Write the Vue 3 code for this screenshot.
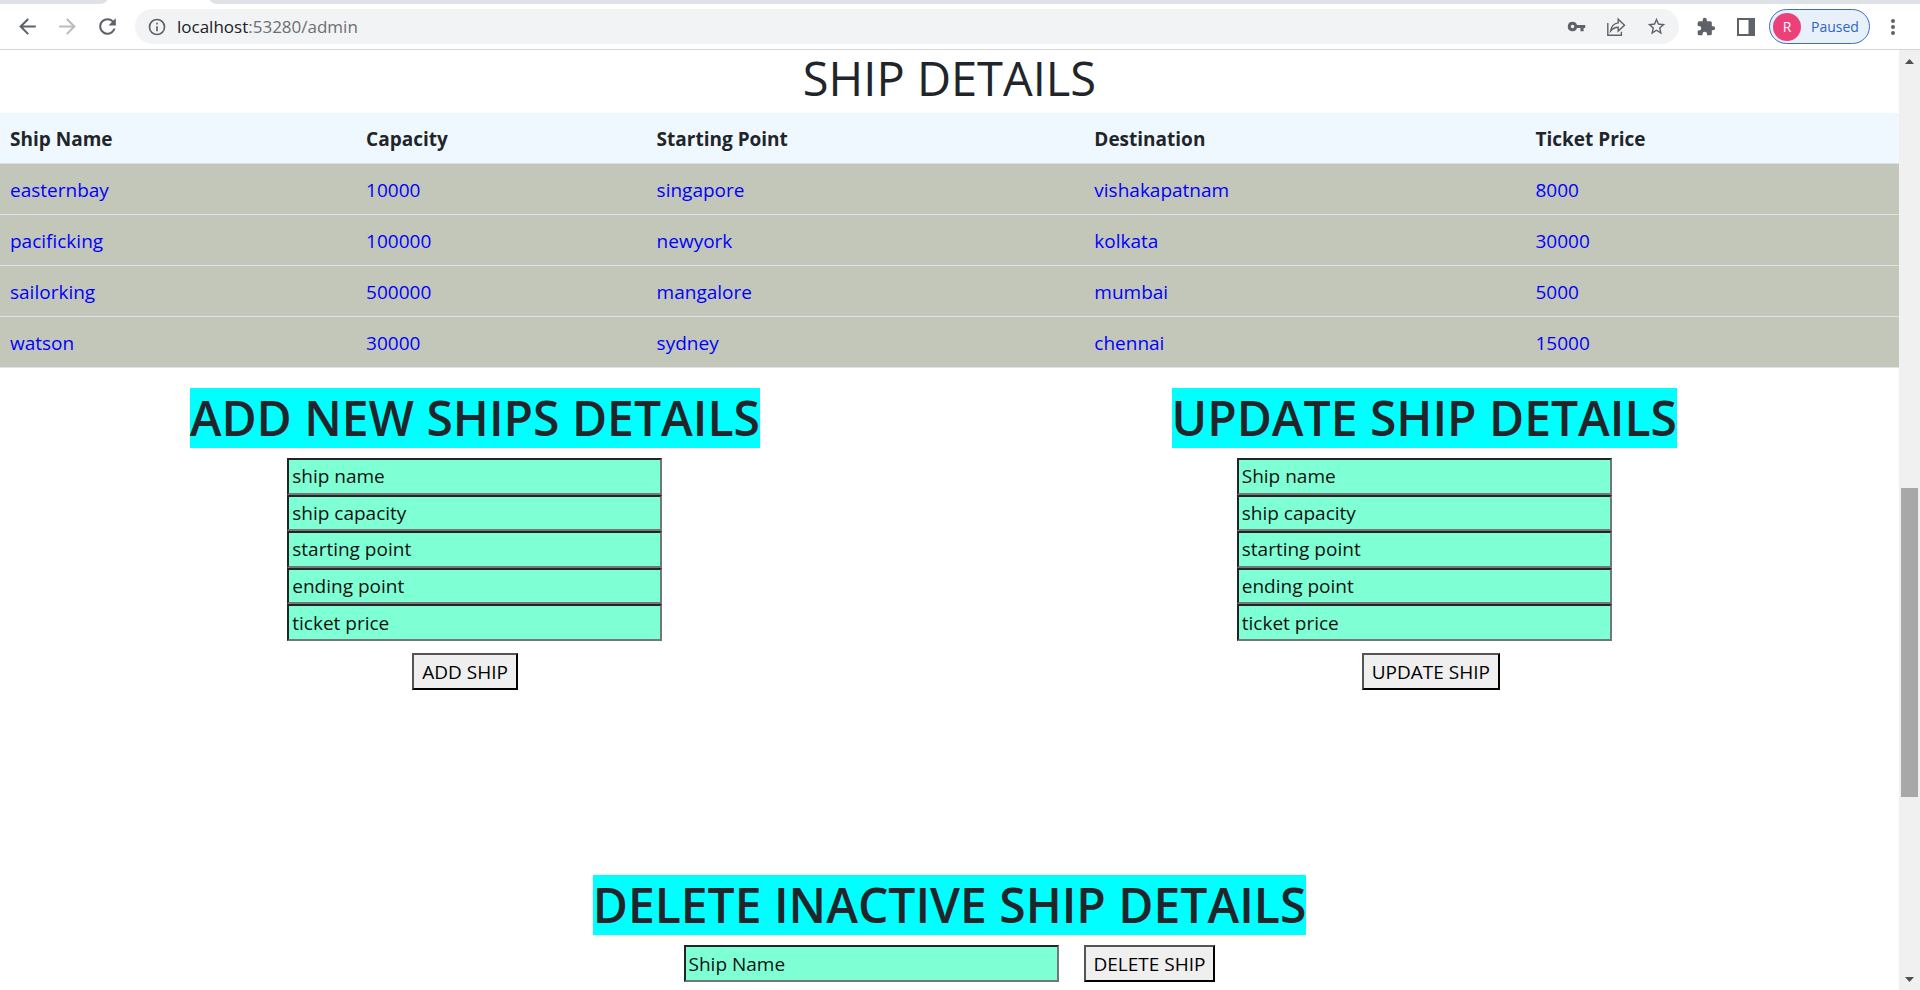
<script setup>
const columns = ['Ship Name', 'Capacity', 'Starting Point', 'Destination', 'Ticket Price']

const ships = [
  { name: 'easternbay', capacity: 10000, from: 'singapore', to: 'vishakapatnam', price: 8000 },
  { name: 'pacificking', capacity: 100000, from: 'newyork', to: 'kolkata', price: 30000 },
  { name: 'sailorking', capacity: 500000, from: 'mangalore', to: 'mumbai', price: 5000 },
  { name: 'watson', capacity: 30000, from: 'sydney', to: 'chennai', price: 15000 }
]

const forms = [
  {
    id: 'add',
    title: 'ADD NEW SHIPS DETAILS',
    fields: ['ship name', 'ship capacity', 'starting point', 'ending point', 'ticket price'],
    action: 'ADD SHIP'
  },
  {
    id: 'update',
    title: 'UPDATE SHIP DETAILS',
    fields: ['Ship name', 'ship capacity', 'starting point', 'ending point', 'ticket price'],
    action: 'UPDATE SHIP'
  }
]
</script>

<template>
  <div class="window">
    <div class="tabstrip"><span class="tab-left"></span><span class="tab-right"></span></div>
    <header class="toolbar">
      <nav class="nav">
        <button class="icon" type="button" aria-label="Back">
          <svg width="25" height="25" viewBox="0 0 24 24"><path d="M20 11H7.8l5.6-5.6L12 4l-8 8 8 8 1.4-1.4L7.8 13H20z" /></svg>
        </button>
        <button class="icon faded" type="button" aria-label="Forward">
          <svg width="25" height="25" viewBox="0 0 24 24"><path d="M4 11h12.2l-5.6-5.6L12 4l8 8-8 8-1.4-1.4 5.6-5.6H4z" /></svg>
        </button>
        <button class="icon" type="button" aria-label="Reload">
          <svg width="25" height="25" viewBox="0 0 24 24"><path d="M17.65 6.35A7.96 7.96 0 0 0 12 4a8 8 0 1 0 7.73 10h-2.08A6 6 0 1 1 12 6c1.66 0 3.14.69 4.22 1.78L13 11h7V4z" /></svg>
        </button>
      </nav>
      <div class="omnibox">
        <button class="icon info" type="button" aria-label="Site information">
          <svg width="20" height="20" viewBox="0 0 24 24"><path d="M11 7h2v2h-2zm0 4h2v6h-2zm1-9a10 10 0 1 0 0 20 10 10 0 0 0 0-20zm0 18a8 8 0 1 1 0-16 8 8 0 0 1 0 16z" /></svg>
        </button>
        <a class="url" href="#">localhost<span>:53280/admin</span></a>
        <button class="icon" type="button" aria-label="Passwords">
          <svg width="19" height="19" viewBox="0 0 24 24"><path d="M12.65 10A6 6 0 0 0 7 6a6 6 0 1 0 5.65 8H17v4h4v-4h2v-4zM7 14.2a2.2 2.2 0 1 1 0-4.4 2.2 2.2 0 0 1 0 4.4z" /></svg>
        </button>
        <button class="icon" type="button" aria-label="Share">
          <svg width="20" height="20" viewBox="0 0 20 20"><path d="M1.800 6v12.200h13.600v-3.400M12.200 2.200v3.700C7.600 6.500 5.200 9.400 4.600 14c2-2.700 4.200-3.800 7.600-3.800v3.900l6.300-5.900z" fill="none" stroke="currentColor" stroke-width="1.400" /></svg>
        </button>
        <button class="icon" type="button" aria-label="Bookmark">
          <svg width="21" height="21" viewBox="0 0 24 24"><path d="M22 9.240l-7.190-.62L12 2 9.190 8.630 2 9.240l5.460 4.730L5.820 21 12 17.270 18.180 21l-1.630-7.030zM12 15.400l-3.760 2.270 1-4.280-3.320-2.880 4.380-.38L12 6.100l1.710 4.040 4.380.38-3.320 2.880 1 4.280z" /></svg>
        </button>
      </div>
      <div class="extras">
        <button class="icon" type="button" aria-label="Extensions">
          <svg width="20" height="20" viewBox="0 0 24 24"><path d="M20.500 11H19V7a2 2 0 0 0-2-2h-4V3.500a2.500 2.500 0 0 0-5 0V5H4a2 2 0 0 0-2 2v3.800h1.500a2.700 2.700 0 0 1 0 5.400H2V20a2 2 0 0 0 2 2h3.800v-1.500a2.700 2.700 0 0 1 5.400 0V22H17a2 2 0 0 0 2-2v-4h1.500a2.500 2.500 0 0 0 0-5z" /></svg>
        </button>
        <button class="icon" type="button" aria-label="Side panel">
          <svg width="18" height="18" viewBox="0 0 18 18"><path d="M0 0h18v18H0zM2 2v14h9.500V2z" fill-rule="evenodd" /></svg>
        </button>
        <button class="profile" type="button"><span class="avatar">R</span>Paused</button>
        <button class="icon menu" type="button" aria-label="Menu">
          <svg width="24" height="24" viewBox="0 0 24 24"><circle cx="12" cy="6" r="2" /><circle cx="12" cy="12" r="2" /><circle cx="12" cy="18" r="2" /></svg>
        </button>
      </div>
    </header>

    <div class="viewport">
      <main class="page">
        <h1 class="title">SHIP DETAILS</h1>
        <table>
          <colgroup>
            <col class="c-name" /><col class="c-capacity" /><col class="c-from" /><col class="c-to" /><col />
          </colgroup>
          <thead>
            <tr><th v-for="c in columns" :key="c" scope="col">{{ c }}</th></tr>
          </thead>
          <tbody>
            <tr v-for="s in ships" :key="s.name">
              <td>{{ s.name }}</td>
              <td>{{ s.capacity }}</td>
              <td>{{ s.from }}</td>
              <td>{{ s.to }}</td>
              <td>{{ s.price }}</td>
            </tr>
          </tbody>
        </table>

        <div class="forms">
          <section v-for="f in forms" :key="f.id" class="panel">
            <h2>{{ f.title }}</h2>
            <form class="ship-form" @submit.prevent>
              <div class="fields">
                <input
                  v-for="(label, i) in f.fields"
                  :id="f.id + i"
                  :key="label"
                  type="text"
                  :placeholder="label"
                  :aria-label="label"
                />
              </div>
              <button class="action" type="submit">{{ f.action }}</button>
            </form>
          </section>
        </div>

        <section class="panel">
          <h2>DELETE INACTIVE SHIP DETAILS</h2>
          <form class="delete-form" @submit.prevent>
            <input type="text" placeholder="Ship Name" aria-label="Ship Name" />
            <button class="action" type="submit">DELETE SHIP</button>
          </form>
        </section>
      </main>

      <div class="scrollbar" aria-hidden="true">
        <svg width="21" height="21" viewBox="0 0 21 21"><path d="M6 14l4.500-5 4.500 5z" /></svg>
        <div class="track"><div class="thumb"></div></div>
        <svg width="21" height="21" viewBox="0 0 21 21"><path d="M6 8l4.500 5 4.500-5z" /></svg>
      </div>
    </div>
  </div>
</template>

<style>
body {
  margin: 0;
  background: #fff;
}
</style>

<style scoped>
.window {
  display: flex;
  flex-direction: column;
  height: 100vh;
  overflow: hidden;
  font-family: "Open Sans", "Noto Sans", sans-serif;
  font-size: 19px;
  line-height: 30px;
  color: #212529;
}
* {
  box-sizing: border-box;
}
button,
input {
  font: inherit;
  margin: 0;
}

.tabstrip {
  display: flex;
  flex: none;
  gap: 103px;
  height: 4px;
}
.tab-left,
.tab-right {
  background: #dee1e6;
}
.tab-left {
  width: 107px;
  border-bottom-right-radius: 8px 4px;
}
.tab-right {
  flex: 1;
  border-bottom-left-radius: 8px 4px;
}
.toolbar {
  display: flex;
  flex: none;
  align-items: center;
  height: 46px;
  padding: 0 15px;
  border-bottom: 1px solid #d5d6d8;
  color: #5f6368;
}
.nav {
  display: flex;
  gap: 15px;
  margin-right: 15px;
}
.icon {
  display: flex;
  align-items: center;
  justify-content: center;
  padding: 0;
  border: 0;
  background: none;
  color: #5f6368;
}
.icon svg {
  display: block;
  fill: currentColor;
}
.faded {
  color: #babcbe;
}
.omnibox {
  display: flex;
  flex: 1;
  align-items: center;
  gap: 20px;
  height: 35px;
  padding: 0 12px;
  border-radius: 18px;
  background: #f1f3f4;
}
.url {
  flex: 1;
  margin-left: -10px;
  font-size: 17px;
  color: #202124;
  text-decoration: none;
}
.url span {
  color: #6b6f73;
}
.extras {
  display: flex;
  align-items: center;
  margin-left: 17px;
}
.extras .icon {
  width: 20px;
  margin-right: 20px;
}
.profile {
  display: flex;
  align-items: center;
  gap: 10px;
  width: 101px;
  height: 35px;
  margin-left: -7px;
  padding: 0 3px;
  border: 1px solid #3a6fd0;
  border-radius: 18px;
  background: #e8f0fa;
  font-size: 14px;
  color: #2f65c4;
}
.avatar {
  flex: none;
  width: 28px;
  height: 28px;
  border-radius: 50%;
  background: #ec407a;
  color: #fff;
  line-height: 28px;
  text-align: center;
}
.extras .menu {
  width: 24px;
  margin: 0 0 0 11px;
}

.viewport {
  display: flex;
  flex: 1;
  min-height: 0;
}
.page {
  flex: 1;
  min-width: 0;
}
.title {
  margin: 0;
  padding-bottom: 7px;
  font-size: 47px;
  font-weight: 400;
  line-height: 56px;
  text-align: center;
}
table {
  width: 100%;
  table-layout: fixed;
  border-collapse: separate;
  border-spacing: 0;
}
.c-name {
  width: 18.75%;
}
.c-capacity {
  width: 15.3%;
}
.c-from {
  width: 23.05%;
}
.c-to {
  width: 23.23%;
}
th,
td {
  height: 51px;
  padding: 1px 10px 0;
  border-bottom: 1px solid #dee2e6;
  text-align: left;
}
th {
  background: #f0f8ff;
  font-weight: 700;
}
td {
  background: #c3c7b9;
  color: #00f;
}

.forms {
  display: grid;
  grid-template-columns: 1fr 1fr;
  padding: 20px 0 185px;
}
.panel {
  display: flex;
  flex-direction: column;
  align-items: center;
}
h2 {
  margin: 0 0 10px;
  background: #0ff;
  font-size: 48px;
  font-weight: 600;
  line-height: 60px;
}
.fields {
  display: grid;
  grid-auto-rows: 1fr;
  height: 183px;
}
input {
  width: 375px;
  height: 37px;
  padding: 1px 3px;
  border: 2px solid;
  border-color: #212529 #767676 #767676 #212529;
  border-radius: 0;
  background: #7fffd4;
  color: #111;
}
.fields input {
  height: 100%;
  min-height: 0;
}
input::placeholder {
  color: #111;
  opacity: 1;
}
.action {
  height: 37px;
  padding: 0 8px;
  border: 2px solid;
  border-color: #555 #000 #000 #555;
  background: #efefef;
  color: #000;
  line-height: 30px;
}
.ship-form .action {
  display: block;
  margin: 12px 0 0 125px;
}
.delete-form {
  display: flex;
  gap: 25px;
}

.scrollbar {
  display: flex;
  flex: none;
  flex-direction: column;
  width: 21px;
  background: #f0f0f0;
}
.scrollbar svg {
  flex: none;
  fill: #505050;
}
.track {
  flex: 1;
  padding: 417px 2px 0;
}
.thumb {
  height: 309px;
  background: #a8a8a8;
}
</style>
